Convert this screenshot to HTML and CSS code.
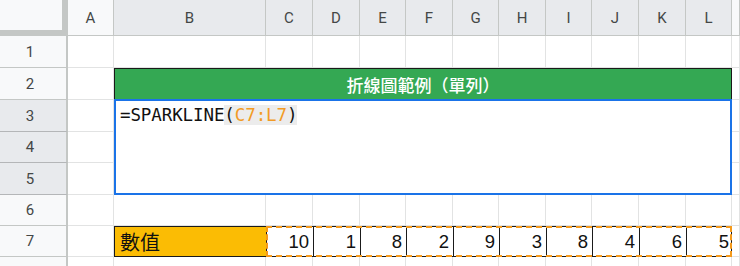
FILE: index.html
```html
<!DOCTYPE html>
<html lang="zh-Hant">
<head>
    <meta charset="UTF-8">
    <title>折線圖範例</title>
    <link rel="stylesheet" href="styles.css">
</head>
<body>
    <div class="sheet">
        <!-- header row -->
        <div class="corner"></div>
        <div class="col-head">A</div>
        <div class="col-head sel">B</div>
        <div class="col-head sel">C</div>
        <div class="col-head sel">D</div>
        <div class="col-head sel">E</div>
        <div class="col-head sel">F</div>
        <div class="col-head sel">G</div>
        <div class="col-head sel">H</div>
        <div class="col-head sel">I</div>
        <div class="col-head sel">J</div>
        <div class="col-head sel">K</div>
        <div class="col-head sel">L</div>
        <div class="col-head"></div>

        <!-- row 1 -->
        <div class="row-head">1</div>
        <div class="cell"></div><div class="cell"></div><div class="cell"></div><div class="cell"></div>
        <div class="cell"></div><div class="cell"></div><div class="cell"></div><div class="cell"></div>
        <div class="cell"></div><div class="cell"></div><div class="cell"></div><div class="cell"></div>
        <div class="cell"></div>

        <!-- row 2 -->
        <div class="row-head">2</div>
        <div class="cell"></div>
        <div class="title">折線圖範例（單列）</div>
        <div class="cell"></div>

        <!-- rows 3-5 -->
        <div class="row-head sel">3</div>
        <div class="cell"></div>
        <div class="formula">=SPARKLINE<span class="paren">(<span class="ref">C7:L7</span>)</span></div>
        <div class="cell"></div>
        <div class="row-head sel">4</div>
        <div class="cell"></div>
        <div class="cell"></div>
        <div class="row-head sel">5</div>
        <div class="cell"></div>
        <div class="cell"></div>

        <!-- row 6 -->
        <div class="row-head">6</div>
        <div class="cell"></div><div class="cell"></div><div class="cell"></div><div class="cell"></div>
        <div class="cell"></div><div class="cell"></div><div class="cell"></div><div class="cell"></div>
        <div class="cell"></div><div class="cell"></div><div class="cell"></div><div class="cell"></div>
        <div class="cell"></div>

        <!-- row 7 -->
        <div class="row-head">7</div>
        <div class="cell"></div>
        <div class="label">數值</div>
        <div class="values">
            <div class="val">10</div>
            <div class="val">1</div>
            <div class="val">8</div>
            <div class="val">2</div>
            <div class="val">9</div>
            <div class="val">3</div>
            <div class="val">8</div>
            <div class="val">4</div>
            <div class="val">6</div>
            <div class="val">5</div>
        </div>
        <div class="cell"></div>

        <!-- row 8 -->
        <div class="row-head"></div>
        <div class="cell"></div><div class="cell"></div><div class="cell"></div><div class="cell"></div>
        <div class="cell"></div><div class="cell"></div><div class="cell"></div><div class="cell"></div>
        <div class="cell"></div><div class="cell"></div><div class="cell"></div><div class="cell"></div>
        <div class="cell"></div>
    </div>
</body>
</html>
```

FILE: styles.css
```css
* {
    margin: 0;
    padding: 0;
    box-sizing: border-box;
}
body {
    background-color: #fff;
    font-family: "Liberation Sans", "Noto Sans CJK TC", sans-serif;
    overflow: hidden;
}

/* Sheet grid */
.sheet {
    display: grid;
    grid-template-columns: 68px 46px 152px 47px 47px 46px 47px 46px 47px 46px 47px 47px 46px 8px;
    grid-template-rows: 36px 32px 32px 32px 31px 32px 31px 31px 20px;
    width: 740px;
    height: 266px;
}
.cell {
    border-right: 1px solid #e2e3e3;
    border-bottom: 1px solid #e2e3e3;
}

/* Headers */
.corner {
    background-color: #f8f9fa;
    border-right: 6px solid #c4c7c5;
    border-bottom: 6px solid #c4c7c5;
}
.col-head,
.row-head {
    display: flex;
    align-items: center;
    justify-content: center;
    background-color: #f8f9fa;
    color: #444746;
    font-family: Roboto, "Liberation Sans", sans-serif;
    font-size: 15px;
    border-right: 1px solid #c4c7c5;
    border-bottom: 1px solid #c4c7c5;
}
.row-head {
    padding-right: 6px;
    border-right: 2px solid #c4c7c5;
}
.col-head.sel,
.row-head.sel {
    background-color: #e8eaed;
}
.row-head.sel {
    border-bottom-color: #b4b6b8;
}

/* Title B2:L2 */
.title {
    grid-column: span 11;
    display: flex;
    align-items: center;
    justify-content: center;
    background-color: #34a853;
    border: 1px solid #1a1a1a;
    border-bottom: none;
    color: #fff;
    font-family: "Noto Sans CJK TC", sans-serif;
    font-size: 17px;
    font-weight: 500;
}

/* Formula B3:L5 */
.formula {
    grid-column: span 11;
    grid-row: span 3;
    border: 2px solid #1a73e8;
    margin-top: -1px;
    padding: 3px 0 0 4px;
    font-family: "DejaVu Sans Mono", "Liberation Mono", monospace;
    font-size: 17.5px;
    line-height: 22px;
    color: #111;
    letter-spacing: -0.1px;
}
.paren {
    background-color: #ececec;
}
.ref {
    color: #f29b25;
}

/* Row 7 */
.label {
    display: flex;
    align-items: center;
    padding-left: 5px;
    background-color: #fbbc04;
    border: 1px solid #1a1a1a;
    border-right: none;
    font-family: "Noto Sans CJK TC", sans-serif;
    font-size: 20px;
    color: #111;
}
.values {
    grid-column: span 10;
    position: relative;
    display: grid;
    grid-template-columns: 47px 47px 46px 47px 46px 47px 46px 47px 47px 46px;
    border: 1px solid #1a1a1a;
}
.values::after {
    content: "";
    position: absolute;
    inset: -1px;
    border: 2px dashed #f59a1c;
}
.val {
    display: flex;
    align-items: center;
    justify-content: flex-end;
    padding-right: 4px;
    border-right: 1px solid #1a1a1a;
    font-size: 18.5px;
    color: #111;
}
.val:last-child {
    border-right: none;
}
```
